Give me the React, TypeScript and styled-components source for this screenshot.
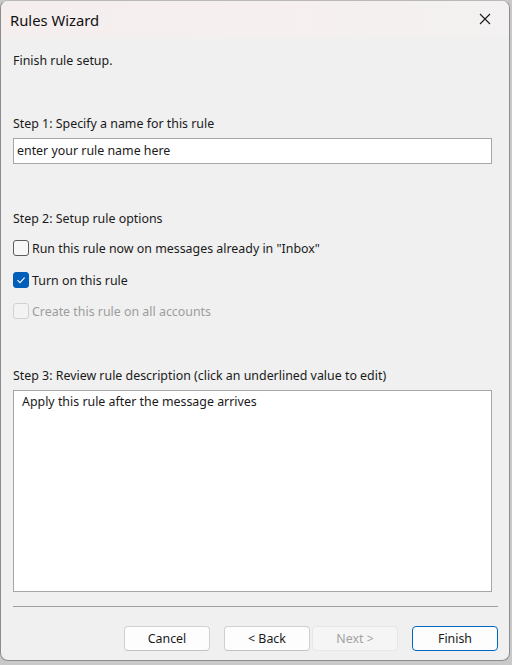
import styled, { createGlobalStyle } from 'styled-components';

const GlobalStyle = createGlobalStyle`
  html, body {
    margin: 0;
    padding: 0;
    background: #c9c9c9;
  }
  body {
    font-family: "Segoe UI", "Noto Sans", "Open Sans", sans-serif;
    font-size: 12.4px;
    color: #1a1a1a;
  }
`;

const Window = styled.div`
  width: 510px;
  height: 661px;
  box-sizing: border-box;
  border: 1px solid #8c8c8c;
  border-top-color: #b8b8b8;
  border-radius: 8px;
  background: #f0f0f0;
  overflow: hidden;
  display: flex;
  flex-direction: column;
`;

const TitleBar = styled.div`
  height: 36px;
  flex: none;
  display: flex;
  align-items: center;
  justify-content: space-between;
  padding: 0 0 0 9px;
  background: linear-gradient(90deg, #f4eeee 0%, #f6efef 50%, #f3f1f1 100%);
`;

const Title = styled.span`
  font-size: 14.8px;
  color: #111;
  padding-top: 1px;
`;

const CloseButton = styled.div`
  width: 44px;
  height: 36px;
  display: flex;
  align-items: center;
  justify-content: center;
  margin-right: 2px;
`;

const Body = styled.div`
  flex: 1;
  display: flex;
  flex-direction: column;
  padding: 16px 11px 0 12px;
`;

const Label = styled.div<{ $top?: number }>`
  line-height: 16px;
  height: 16px;
  margin-top: ${({ $top }) => $top ?? 0}px;
  white-space: nowrap;
`;

const TextInput = styled.div`
  margin-top: 6px;
  margin-right: 6px;
  height: 26px;
  box-sizing: border-box;
  border: 1px solid #a6a6a6;
  background: #fff;
  padding: 0 3px;
  display: flex;
  align-items: center;
  line-height: 16px;
`;

const CheckRow = styled.div<{ $top: number; $disabled?: boolean }>`
  margin-top: ${({ $top }) => $top}px;
  display: flex;
  align-items: center;
  gap: 3px;
  height: 16px;
  white-space: nowrap;
  color: ${({ $disabled }) => ($disabled ? '#9d9d9d' : '#1a1a1a')};
`;

const Box = styled.span<{ $checked?: boolean; $disabled?: boolean }>`
  width: 16px;
  height: 16px;
  box-sizing: border-box;
  border-radius: 3px;
  flex: none;
  display: flex;
  align-items: center;
  justify-content: center;
  border: 1px solid
    ${({ $checked, $disabled }) =>
      $checked ? '#005fb8' : $disabled ? '#d2d2d2' : '#5c5c5c'};
  background: ${({ $checked, $disabled }) =>
    $checked ? '#005fb8' : $disabled ? '#f3f3f3' : '#f7f7f7'};
`;

const Description = styled.div`
  margin-top: 6px;
  margin-right: 6px;
  height: 202px;
  box-sizing: border-box;
  border: 1px solid #a6a6a6;
  background: #fff;
  padding: 3px 8px;
  line-height: 16px;
`;

const Separator = styled.div`
  margin-top: 14px;
  height: 1px;
  background: #a0a0a0;
`;

const ButtonRow = styled.div`
  margin-top: 19px;
  display: flex;
  justify-content: flex-end;
  align-items: center;
  gap: 14px;
`;

const ButtonGroup = styled.div`
  display: flex;
  gap: 2px;
`;

const Button = styled.button<{ $primary?: boolean }>`
  width: 86px;
  height: 25px;
  box-sizing: border-box;
  border-radius: 4px;
  font-family: inherit;
  font-size: 12.4px;
  color: #1a1a1a;
  background: #fdfdfd;
  border: 1px solid ${({ $primary }) => ($primary ? '#0067c0' : '#d0d0d0')};
  border-bottom-color: ${({ $primary }) => ($primary ? '#0067c0' : '#c2c2c2')};
  padding: 0;

  &:disabled {
    color: #a3a3a3;
    background: #f5f5f5;
    border-color: #e6e6e6;
  }
`;

function CloseIcon() {
  return (
    <svg width="12" height="12" viewBox="0 0 12 12">
      <path d="M1 1 L11 11 M11 1 L1 11" stroke="#1a1a1a" strokeWidth="1.1" fill="none" />
    </svg>
  );
}

function Check() {
  return (
    <svg width="10" height="10" viewBox="0 0 10 10">
      <path d="M1.5 5.2 L4 7.6 L8.6 2.6" stroke="#fff" strokeWidth="1.1" fill="none" />
    </svg>
  );
}

export default function App() {
  return (
    <>
      <GlobalStyle />
      <Window>
        <TitleBar>
          <Title>Rules Wizard</Title>
          <CloseButton>
            <CloseIcon />
          </CloseButton>
        </TitleBar>
        <Body>
          <Label>Finish rule setup.</Label>

          <Label $top={47}>Step 1: Specify a name for this rule</Label>
          <TextInput>enter your rule name here</TextInput>

          <Label $top={47}>Step 2: Setup rule options</Label>
          <CheckRow $top={13}>
            <Box />
            Run this rule now on messages already in "Inbox"
          </CheckRow>
          <CheckRow $top={16}>
            <Box $checked>
              <Check />
            </Box>
            Turn on this rule
          </CheckRow>
          <CheckRow $top={15} $disabled>
            <Box $disabled />
            Create this rule on all accounts
          </CheckRow>

          <Label $top={49}>Step 3: Review rule description (click an underlined value to edit)</Label>
          <Description>Apply this rule after the message arrives</Description>

          <Separator />

          <ButtonRow>
            <Button>Cancel</Button>
            <ButtonGroup>
              <Button>&lt; Back</Button>
              <Button disabled>Next &gt;</Button>
            </ButtonGroup>
            <Button $primary>Finish</Button>
          </ButtonRow>
        </Body>
      </Window>
    </>
  );
}
